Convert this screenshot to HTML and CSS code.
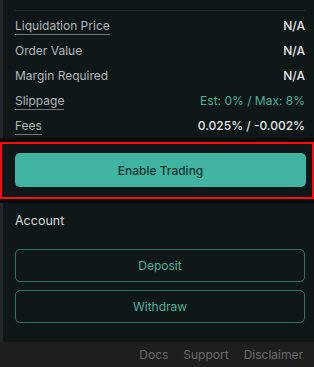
FILE: index.html
```html
<!DOCTYPE html>
<html>
<head>
<meta charset="utf-8">
<link rel="stylesheet" href="styles.css">
</head>
<body>
<div class="app">
  <section class="panel summary">
    <div class="divider"></div>
    <div class="row"><span class="label ul">Liquidation Price</span><span class="value">N/A</span></div>
    <div class="row"><span class="label">Order Value</span><span class="value">N/A</span></div>
    <div class="row"><span class="label">Margin Required</span><span class="value">N/A</span></div>
    <div class="row"><span class="label ul">Slippage</span><span class="value teal">Est: 0% / Max: 8%</span></div>
    <div class="row"><span class="label ul">Fees</span><span class="value">0.025% / -0.002%</span></div>
  </section>
  <section class="highlight">
    <button class="btn-primary">Enable Trading</button>
  </section>
  <section class="panel account">
    <div class="title">Account</div>
    <button class="btn-outline">Deposit</button>
    <button class="btn-outline">Withdraw</button>
  </section>
  <footer class="footer">
    <a>Docs</a><a>Support</a><a>Disclaimer</a>
  </footer>
</div>
</body>
</html>
```
FILE: styles.css
```css
* { box-sizing: border-box; }
html, body { margin: 0; padding: 0; }
body {
  background: #0a0d0e;
  font-family: Inter, "Noto Sans", sans-serif;
  width: 314px;
  height: 367px;
  overflow: hidden;
}
.app {
  display: flex;
  flex-direction: column;
  height: 367px;
}
.panel {
  background: #0f1719;
  border-left: 3px solid #23272a;
}
.summary {
  padding: 10px 9px 0 12px;
  height: 138px;
}
.divider {
  height: 1px;
  background: #262d2f;
  margin-bottom: 2px;
}
.row {
  height: 25px;
  display: flex;
  align-items: center;
  justify-content: space-between;
  font-size: 12px;
}
.label {
  color: #b3b8b9;
  line-height: 14px;
}
.label.ul {
  border-bottom: 1px solid #6f7778;
  padding-bottom: 1px;
  margin-top: 2px;
}
.value {
  color: #e6e7e7;
  font-weight: 500;
}
.value.teal {
  color: #4db29b;
  font-weight: 400;
}
.highlight {
  margin-top: 4px;
  border: 2px solid #ff0a0a;
  background: #0f1719;
  padding: 9px 6px 10px 13px;
  height: 57px;
}
.btn-primary {
  display: block;
  width: 100%;
  height: 34px;
  border: none;
  border-radius: 5px;
  background: #40b4a0;
  color: #123430;
  font-family: Inter, "Noto Sans", sans-serif;
  font-size: 12px;
  font-weight: 500;
}
.account {
  margin-top: 4px;
  height: 139px;
  padding: 10px 9px 0 12px;
  display: flex;
  flex-direction: column;
}
.title {
  color: #d6dada;
  font-size: 12.5px;
  line-height: 16px;
  margin-bottom: 20px;
}
.btn-outline {
  display: block;
  width: 100%;
  height: 33px;
  background: transparent;
  border: 1px solid #2f7566;
  border-radius: 5px;
  color: #4faf98;
  font-family: Inter, "Noto Sans", sans-serif;
  font-size: 12px;
  font-weight: 400;
  margin-bottom: 8px;
}
.footer {
  flex: 1;
  background: #1f1e1e;
  display: flex;
  justify-content: flex-end;
  align-items: center;
  gap: 15px;
  padding-right: 11px;
  font-size: 12px;
}
.footer a {
  color: #6b6c6c;
}
```
